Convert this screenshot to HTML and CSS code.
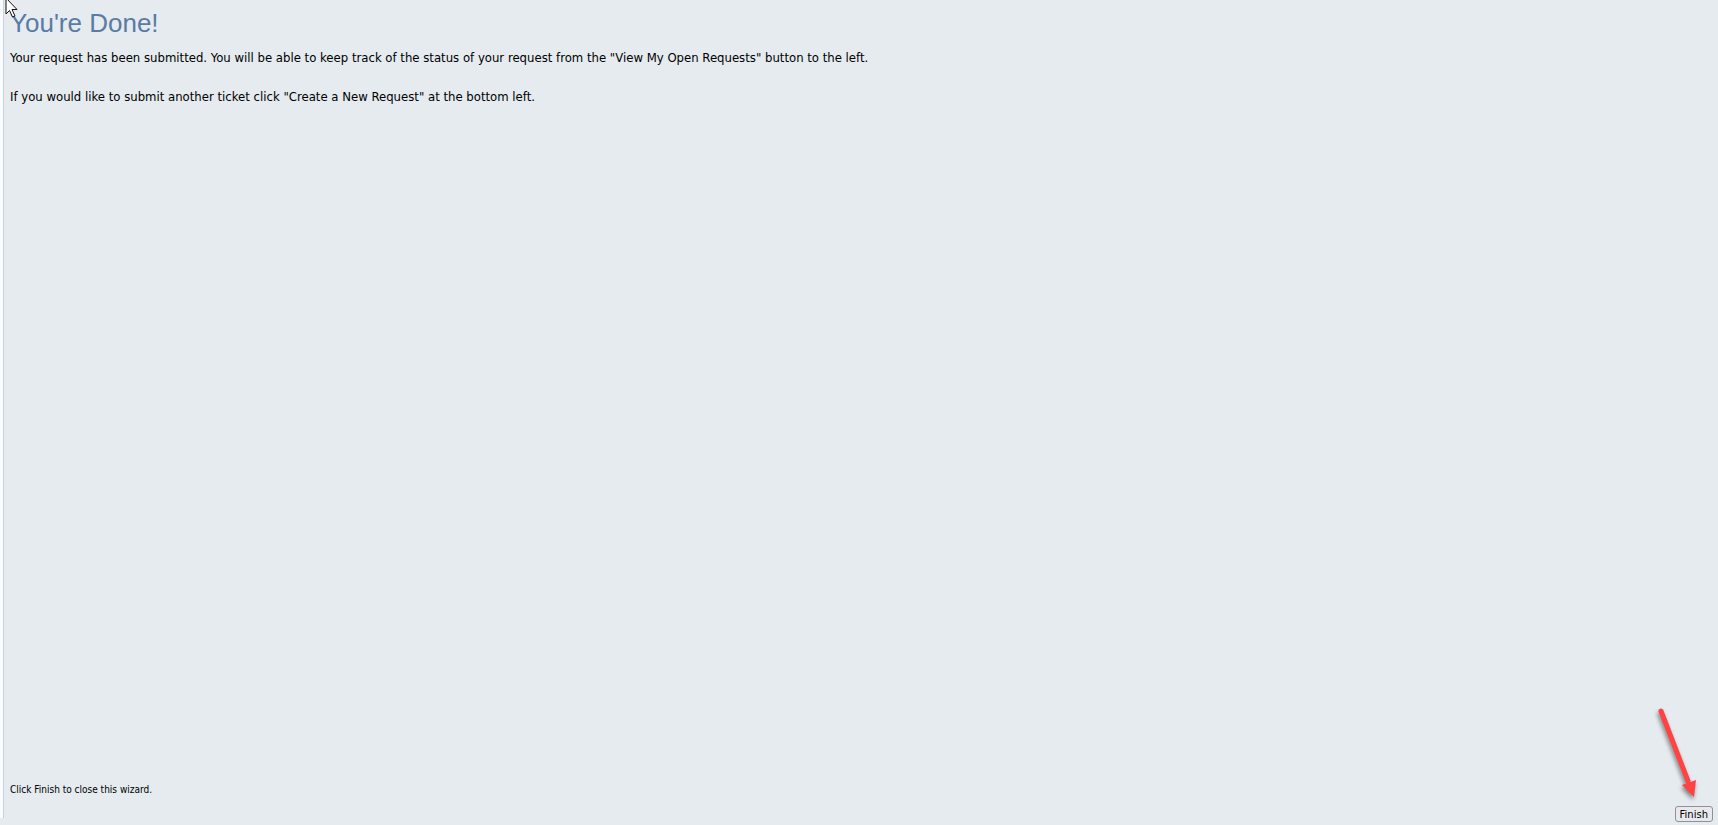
FILE: index.html
```html
<!DOCTYPE html>
<html lang="en">
<head>
  <meta charset="UTF-8">
  <title>You're Done!</title>
  <meta name="viewport" content="width=device-width, initial-scale=1.0">
  <link rel="stylesheet" href="styles.css">
</head>
<body>

  <div class="splitter"></div>

  <main class="wizard">
    <h1>You're Done!</h1>
    <p>Your request has been submitted. You will be able to keep track of the status of your request from the "View My Open Requests" button to the left.</p>
    <p>If you would like to submit another ticket click "Create a New Request" at the bottom left.</p>

    <div class="wizard-footer">
      <p class="hint">Click Finish to close this wizard.</p>
      <div class="buttons">
        <!-- Arrow pointing at the button -->
        <svg class="arrow" width="48" height="100" viewBox="0 0 48 100" aria-hidden="true">
          <path d="M11 10 L38 80" stroke="#ff4343" stroke-width="5" stroke-linecap="round"/>
          <path d="M32 84 L46 79 L44 96 Z" fill="#ff4343"/>
        </svg>
        <button type="button">Finish</button>
      </div>
    </div>
  </main>

  <svg class="cursor" width="13" height="21" viewBox="0 0 13 21" aria-hidden="true">
    <path d="M1 1 V17 L4.500 13.500 L7.500 20 L10 19 L7 12.500 H12 Z" fill="#fff" stroke="#111"/>
  </svg>

</body>
</html>
```
FILE: styles.css
```css
* {
  box-sizing: border-box;
}

body {
  display: flex;
  min-height: 100vh;
  margin: 0;
  background-color: #e5ebef;
  color: #000;
  font-family: Tahoma, "DejaVu Sans Condensed", sans-serif;
  font-size: 13px;
}

.splitter {
  width: 4px;
  margin-bottom: 7px;
  background-color: #fafcfd;
  border-right: 1px solid #c5d3e6;
}

.wizard {
  display: flex;
  flex: 1;
  flex-direction: column;
  padding: 8px 5px 3px 6px;
}

h1 {
  margin: 0 0 12px;
  color: #5a7ba5;
  font-family: Arial, "Liberation Sans", sans-serif;
  font-size: 26px;
  font-weight: normal;
  line-height: 30px;
}

p {
  margin: 0 0 23px;
  line-height: 16px;
}

.wizard-footer {
  margin-top: auto;
}

.hint {
  margin-bottom: 8px;
  font-size: 10px;
}

.buttons {
  position: relative;
  display: flex;
  justify-content: flex-end;
}

button {
  height: 16px;
  padding: 1px 4px 0;
  background-color: #e9e9ed;
  border: 1px solid #8f8f9d;
  border-radius: 3px;
  color: #000;
  font-family: Verdana, "DejaVu Sans", sans-serif;
  font-size: 10px;
  line-height: 13px;
}

.arrow {
  position: absolute;
  right: 15px;
  bottom: 21px;
  fill: none;
  filter: drop-shadow(-1px 3px 2px rgba(0, 0, 0, 0.45));
  pointer-events: none;
}

.cursor {
  position: absolute;
  top: -3px;
  left: 5px;
  pointer-events: none;
}
```
